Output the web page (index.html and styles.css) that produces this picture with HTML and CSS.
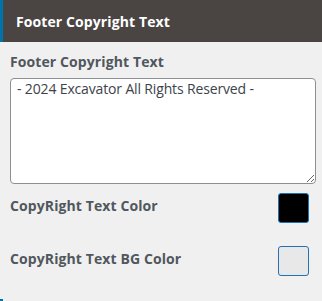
FILE: index.html
```html
<!DOCTYPE html>
<html lang="en">
<head>
    <meta charset="UTF-8">
    <title>Footer Copyright Text</title>
    <link rel="stylesheet" href="styles.css">
</head>
<body>
    <!-- Section Header -->
    <div class="section-title">
        <h3>Footer Copyright Text</h3>
    </div>

    <!-- Controls -->
    <div class="section-body">
        <label class="control-label" for="copyText">Footer Copyright Text</label>
        <textarea id="copyText" class="copy-textarea">- 2024 Excavator All Rights Reserved -</textarea>

        <div class="color-row">
            <span class="control-label">CopyRight Text Color</span>
            <span class="swatch swatch-dark"></span>
        </div>

        <div class="color-row">
            <span class="control-label">CopyRight Text BG Color</span>
            <span class="swatch swatch-light"></span>
        </div>
    </div>
    <div class="next-section"></div>
</body>
</html>
```
FILE: styles.css
```css
* {
    margin: 0;
    padding: 0;
    box-sizing: border-box;
}

body {
    font-family: 'Open Sans', 'Noto Sans', sans-serif;
    background-color: #f0f0f0;
    color: #50575e;
    width: 322px;
    height: 301px;
    overflow: hidden;
}

/* Section Header */
.section-title {
    height: 42px;
    background-color: #4a4543;
    border-left: 3px solid #0073aa;
    display: flex;
    align-items: center;
    padding-left: 13px;
}

.section-title h3 {
    font-size: 14px;
    font-weight: 700;
    color: #fff;
    letter-spacing: 0.1px;
}

/* Section Body */
.section-body {
    padding: 10px 6px 0 10px;
}

.control-label {
    display: block;
    font-size: 14px;
    font-weight: 700;
    color: #50575e;
    line-height: 20px;
    letter-spacing: 0.1px;
}

.copy-textarea {
    display: block;
    width: 306px;
    height: 106px;
    margin-top: 6px;
    padding: 0 6px;
    font-family: inherit;
    font-size: 14px;
    line-height: 20px;
    letter-spacing: -0.15px;
    color: #3c434a;
    background: #fff;
    border: 1px solid #8c8f94;
    border-radius: 4px;
    resize: vertical;
}

.color-row {
    display: flex;
    justify-content: space-between;
    align-items: center;
    padding-right: 7px;
    margin-top: 9px;
    height: 30px;
}

.color-row .control-label {
    padding-bottom: 4px;
}

.color-row + .color-row {
    margin-top: 23px;
}

.swatch {
    width: 31px;
    height: 30px;
    border-radius: 3px;
    border: 1px solid #2271b1;
}

.swatch-dark {
    background-color: #000;
}

.swatch-light {
    background-color: #e8e8e8;
}

.next-section {
    margin-top: 23px;
    width: 3px;
    height: 4px;
    background-color: #0073aa;
}
```
